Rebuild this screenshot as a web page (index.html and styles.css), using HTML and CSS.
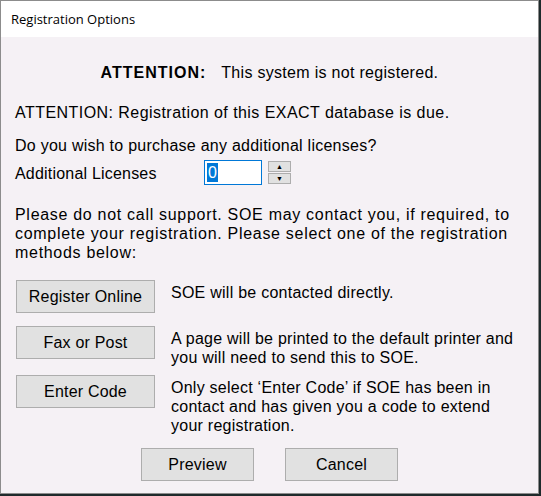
FILE: index.html
```html
<!DOCTYPE html>
<html lang="en">
<head>
  <meta charset="UTF-8">
  <title>Registration Options</title>
  <link rel="stylesheet" href="styles.css">
</head>
<body>
  <div class="window">
    <div class="titlebar">Registration Options</div>

    <div class="content">
      <p class="heading"><b>ATTENTION:</b><span>This system is not registered.</span></p>

      <p class="due">ATTENTION: Registration of this EXACT database is due.</p>

      <p class="ask">Do you wish to purchase any additional licenses?</p>
      <div class="licenses">
        <label for="licCount">Additional Licenses</label>
        <div class="numbox" id="licCount"><span class="sel">0</span></div>
        <div class="spinner">
          <button class="spin">&#9650;</button>
          <button class="spin">&#9660;</button>
        </div>
      </div>

      <p class="note">Please do not call support. SOE may contact you, if required, to<br>complete your registration. Please select one of the registration<br>methods below:</p>

      <div class="options">
        <div class="opt">
          <button class="btn wide">Register Online</button>
          <p class="desc">SOE will be contacted directly.</p>
        </div>
        <div class="opt tall">
          <button class="btn wide">Fax or Post</button>
          <p class="desc">A page will be printed to the default printer and<br>you will need to send this to SOE.</p>
        </div>
        <div class="opt last">
          <button class="btn wide">Enter Code</button>
          <p class="desc">Only select &lsquo;Enter Code&rsquo; if SOE has been in<br>contact and has given you a code to extend<br>your registration.</p>
        </div>
      </div>

      <div class="actions">
        <button class="btn">Preview</button>
        <button class="btn">Cancel</button>
      </div>
    </div>
  </div>
</body>
</html>
```

FILE: styles.css
```css
body {
  margin: 0;
  background-color: #1e2a2b;
  font-family: "Liberation Sans", Arial, sans-serif;
  font-size: 16px;
  color: #000;
}
p {
  margin: 0;
  line-height: 19px;
  letter-spacing: 0.25px;
}
.window {
  width: 539px;
  height: 494px;
  box-sizing: border-box;
  border: 1px solid #8c8c8c;
  background-color: #f5f1f5;
  overflow: hidden;
}
.titlebar {
  height: 36px;
  background-color: #fff;
  padding-left: 10px;
  font-family: "Open Sans", sans-serif;
  font-size: 13px;
  line-height: 36px;
  color: #000;
}
.content {
  padding: 0 0 0 14px;
}
.heading {
  margin-top: 26px;
  margin-left: -14px;
  text-align: center;
}
.heading b {
  letter-spacing: 1px;
}
.heading span {
  margin-left: 15px;
  letter-spacing: 0.3px;
}
.due {
  margin-top: 21px;
  letter-spacing: 0.45px;
}
.ask {
  margin-top: 14px;
}
.licenses {
  display: flex;
  align-items: center;
  height: 25px;
  margin-top: 5px;
}
.licenses label {
  width: 189px;
  padding-top: 3px;
  letter-spacing: 0.2px;
}
.numbox {
  width: 58px;
  height: 25px;
  box-sizing: border-box;
  border: 1px solid #0078d7;
  background: #fff;
  padding: 2px 0 0 2px;
  line-height: 19px;
}
.sel {
  background: #0078d7;
  color: #fff;
  display: inline-block;
  padding: 0 1px;
}
.spinner {
  display: flex;
  flex-direction: column;
  margin-left: 6px;
  gap: 1px;
}
.spin {
  width: 23px;
  height: 11px;
  padding: 0;
  border: 1px solid #adadad;
  background: #e1e1e1;
  font-size: 7px;
  line-height: 9px;
  color: #000;
}
.note {
  margin-top: 20px;
  letter-spacing: 0.7px;
}
.btn {
  height: 33px;
  width: 113px;
  border: 1px solid #adadad;
  background-color: #e1e1e1;
  font-family: "Liberation Sans", Arial, sans-serif;
  font-size: 16px;
  letter-spacing: 0.2px;
  color: #000;
  padding: 0;
}
.btn.wide {
  width: 139px;
  flex-shrink: 0;
}
.options {
  margin-top: 18px;
}
.opt {
  display: flex;
  align-items: flex-start;
  gap: 16px;
  min-height: 46px;
  margin-left: 1px;
}
.opt.tall {
  min-height: 49px;
}
.opt.last {
  min-height: 0;
}
.desc {
  padding-top: 3px;
}
.actions {
  display: flex;
  justify-content: center;
  gap: 31px;
  margin: 13px 0 0 -14px;
}
```
